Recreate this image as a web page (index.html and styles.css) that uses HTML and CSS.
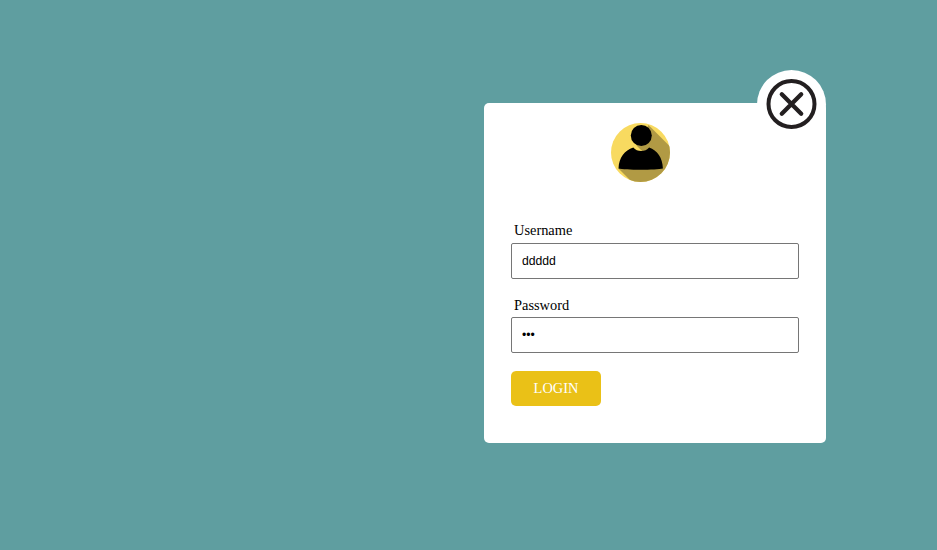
FILE: index.html
```html
<!DOCTYPE html>
<html lang="en">
<head>
<meta charset="utf-8">
<title>Login</title>
<link rel="stylesheet" href="styles.css">
</head>
<body>
<main class="card">
  <button class="close" type="button" aria-label="Close">
    <svg viewBox="0 0 69 69" fill="none" stroke="#231f20" stroke-linecap="round">
      <circle cx="34.5" cy="34" r="23" stroke-width="4"/>
      <path d="M24.8 24.3L44.2 43.7M44.2 24.3L24.8 43.7" stroke-width="4.3"/>
    </svg>
  </button>
  <svg class="avatar" viewBox="0.5 0.5 60 60">
    <defs><clipPath id="disc"><circle cx="30" cy="30" r="29.5"/></clipPath></defs>
    <g clip-path="url(#disc)">
      <rect width="60" height="60" fill="#f8da60"/>
      <path d="M38 2.5L66 30.5V66H28L8 46L26 23Z" fill="#b19a44"/>
      <path d="M22 22L24 30H33L26 23Z" fill="#f8da60"/>
    </g>
    <path d="M8 46C8.5 35 14 28 22.8 25C26.5 29.8 35 29.8 38.6 25C46.8 28 52 35 52.4 46C46 47.7 14 47.7 8 46Z" fill="#000"/>
    <circle cx="30.8" cy="13" r="10.5" fill="#000"/>
  </svg>
  <form class="form">
    <div class="field">
      <label for="user">Username</label>
      <input id="user" type="text" value="ddddd">
    </div>
    <div class="field">
      <label for="pass">Password</label>
      <input id="pass" type="password" value="abc">
    </div>
    <button class="login" type="button">LOGIN</button>
  </form>
</main>
</body>
</html>
```
FILE: styles.css
```css
* {
  box-sizing: border-box;
}

body {
  margin: 0;
  min-height: 550px;
  background: #5f9ea0;
  font-family: "Liberation Serif", "Times New Roman", serif;
}

.card {
  position: relative;
  float: left;
  width: 342px;
  height: 340px;
  margin: 103px 0 0 484px;
  padding: 20px 27px 0;
  border-radius: 5px;
  background: #fff;
}

.close {
  position: absolute;
  top: -33px;
  right: 0;
  width: 69px;
  height: 69px;
  padding: 0;
  border: 0;
  border-radius: 50%;
  background: #fff;
}

.close svg,
.avatar {
  display: block;
}

.avatar {
  width: 60px;
  height: 60px;
  margin-left: 100px;
}

.form {
  padding-top: 39px;
}

.field {
  height: 74px;
}

.field:nth-child(2) {
  height: 75px;
}

label {
  display: block;
  height: 21px;
  padding-left: 3px;
  font-size: 14.4px;
  line-height: 17px;
}

.field:nth-child(2) label {
  line-height: 19px;
}

input {
  display: block;
  width: 100%;
  height: 36px;
  padding: 0 10px;
  border: 1px solid #767676;
  border-radius: 2px;
  font: 12.2px "Liberation Sans", Arial, sans-serif;
  color: #000;
}

.login {
  display: block;
  width: 90px;
  height: 35px;
  padding: 0;
  border: 0;
  border-radius: 5px;
  background: #eac117;
  color: #fff;
  font: 14.4px "Liberation Serif", "Times New Roman", serif;
}
```
